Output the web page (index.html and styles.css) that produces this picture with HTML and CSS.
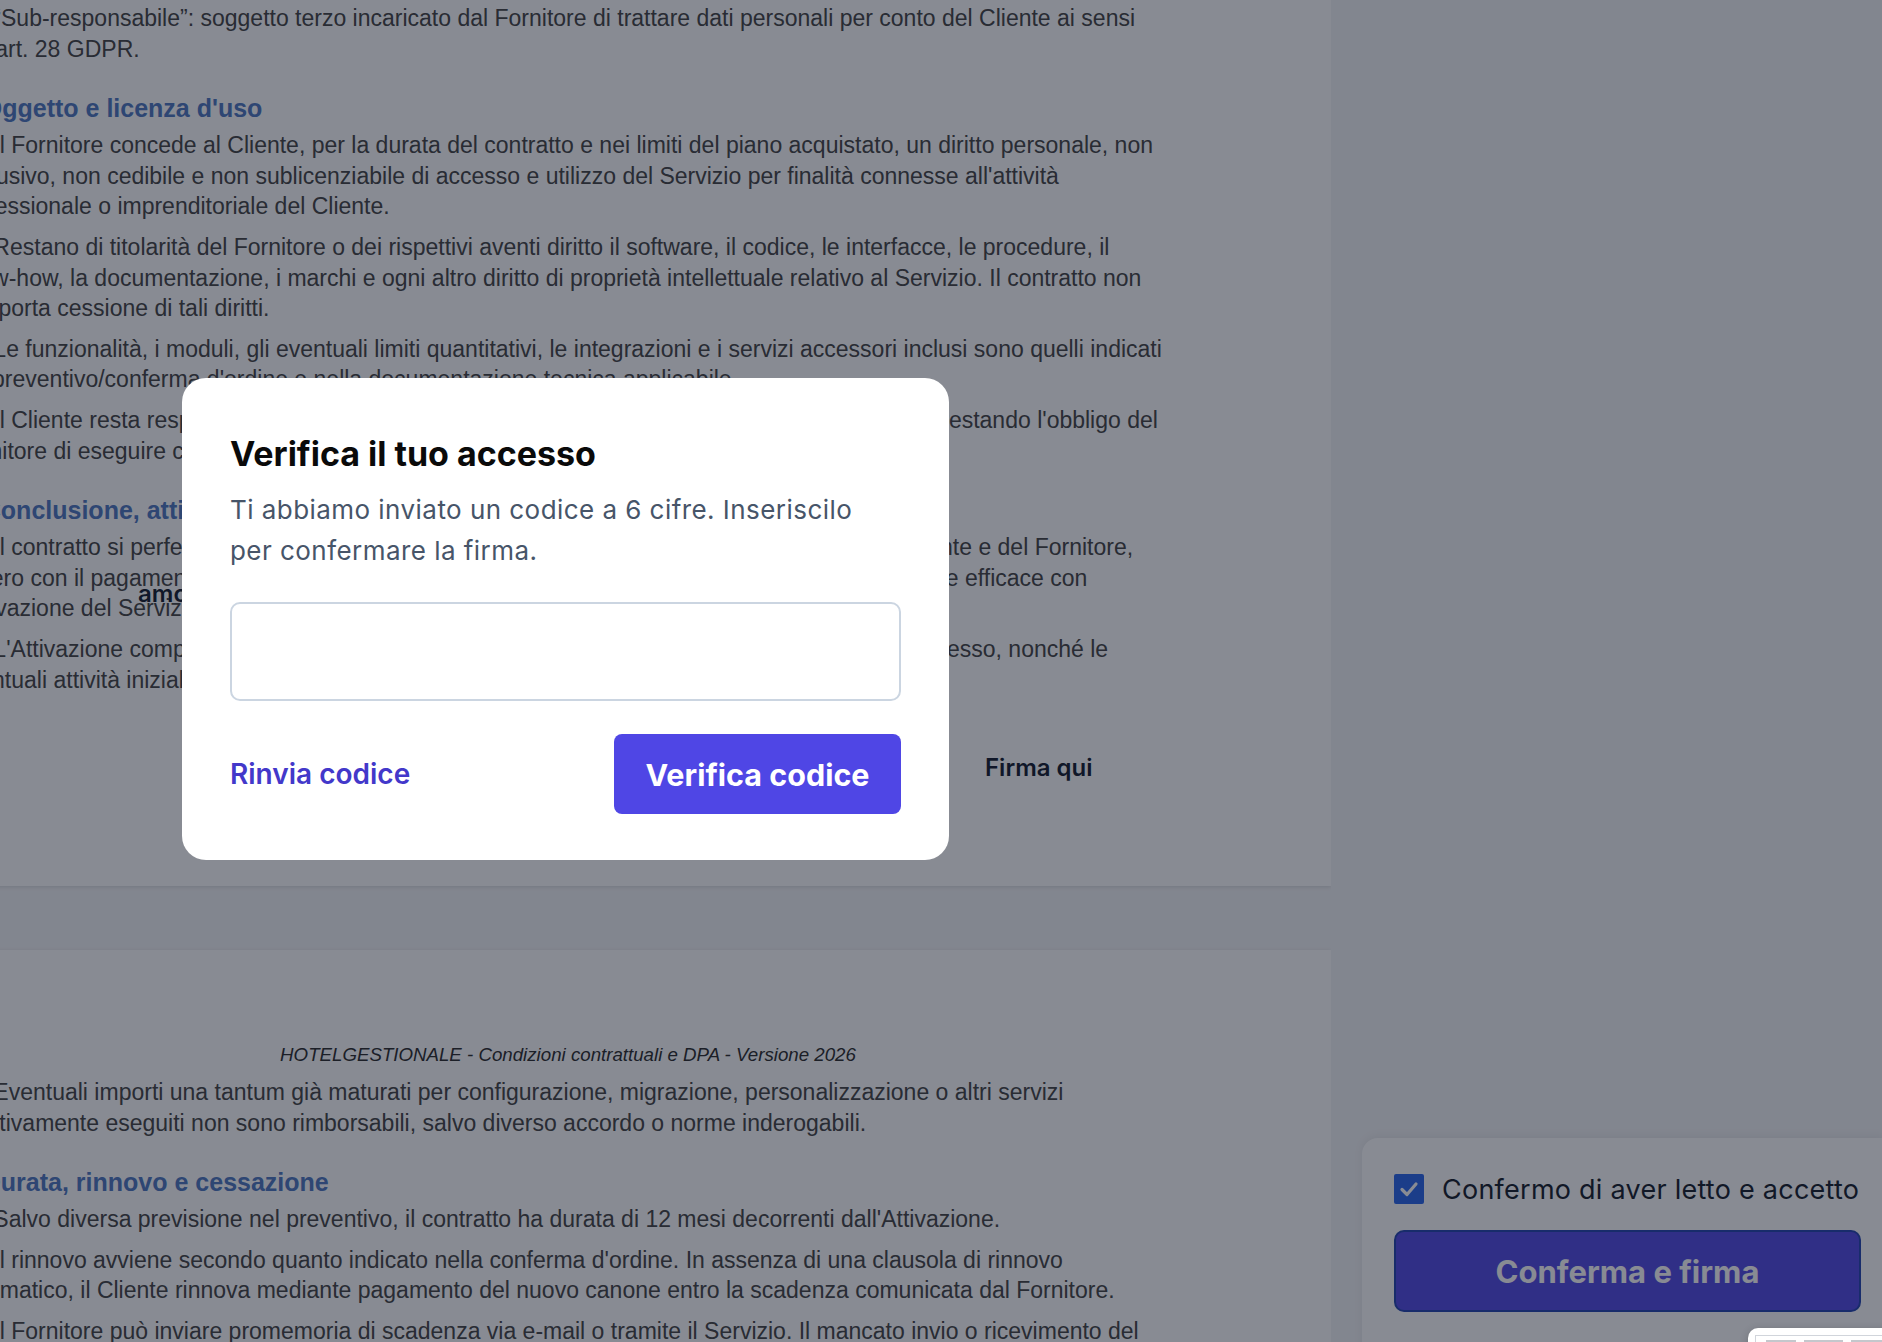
FILE: index.html
```html
<!DOCTYPE html>
<html lang="it">
<head>
<meta charset="utf-8">
<title>Firma contratto - HOTELGESTIONALE</title>
<link rel="stylesheet" href="styles.css">
</head>
<body>
<div class="app">
  <main class="viewer">
    <div class="strip">
      <section class="page page-1">
        <p class="para"><span class="ln">1.8 “Sub-responsabile”: soggetto terzo incaricato dal Fornitore di trattare dati personali per conto del Cliente ai sensi</span><span class="ln">dell'art. 28 GDPR.</span></p>
        <h2 class="sec">2. Oggetto e licenza d'uso</h2>
        <p class="para"><span class="ln">2.1 Il Fornitore concede al Cliente, per la durata del contratto e nei limiti del piano acquistato, un diritto personale, non</span><span class="ln">esclusivo, non cedibile e non sublicenziabile di accesso e utilizzo del Servizio per finalità connesse all'attività</span><span class="ln">professionale o imprenditoriale del Cliente.</span></p>
        <p class="para"><span class="ln">2.2 Restano di titolarità del Fornitore o dei rispettivi aventi diritto il software, il codice, le interfacce, le procedure, il</span><span class="ln">know-how, la documentazione, i marchi e ogni altro diritto di proprietà intellettuale relativo al Servizio. Il contratto non</span><span class="ln">comporta cessione di tali diritti.</span></p>
        <p class="para"><span class="ln">2.3 Le funzionalità, i moduli, gli eventuali limiti quantitativi, le integrazioni e i servizi accessori inclusi sono quelli indicati</span><span class="ln">nel preventivo/conferma d'ordine e nella documentazione tecnica applicabile.</span></p>
        <p class="para"><span class="ln">2.4 Il Cliente resta responsabile dell'utilizzo del Servizio da parte dei suoi utenti autorizzati fermo restando l'obbligo del</span><span class="ln">Fornitore di eseguire correttamente le prestazioni contrattuali.</span></p>
        <h2 class="sec">3. Conclusione, attivazione e accesso</h2>
        <p class="para"><span class="ln">3.1 Il contratto si perfeziona con l'accettazione delle presenti condizioni generali da parte del Cliente e del Fornitore,</span><span class="ln">ovvero con il pagamento della prima fattura inviata dal Fornitore e diviene pienamente vincolante e efficace con</span><span class="ln">l'attivazione del Servizio.</span></p>
        <p class="para"><span class="ln">3.2 L'Attivazione comprende la creazione dell'account utente, la consegna delle credenziali di accesso, nonché le</span><span class="ln">eventuali attività iniziali di configurazione concordate.</span></p>
        <span class="field-label field-a">amo</span>
        <span class="field-label field-b">Firma qui</span>
      </section>
      <section class="page page-2">
        <p class="running-head">HOTELGESTIONALE - Condizioni contrattuali e DPA - Versione 2026</p>
        <p class="para"><span class="ln">3.4 Eventuali importi una tantum già maturati per configurazione, migrazione, personalizzazione o altri servizi</span><span class="ln">effettivamente eseguiti non sono rimborsabili, salvo diverso accordo o norme inderogabili.</span></p>
        <h2 class="sec">4. Durata, rinnovo e cessazione</h2>
        <p class="para"><span class="ln">4.1 Salvo diversa previsione nel preventivo, il contratto ha durata di 12 mesi decorrenti dall'Attivazione.</span></p>
        <p class="para"><span class="ln">4.2 Il rinnovo avviene secondo quanto indicato nella conferma d'ordine. In assenza di una clausola di rinnovo</span><span class="ln">automatico, il Cliente rinnova mediante pagamento del nuovo canone entro la scadenza comunicata dal Fornitore.</span></p>
        <p class="para"><span class="ln">4.3 Il Fornitore può inviare promemoria di scadenza via e-mail o tramite il Servizio. Il mancato invio o ricevimento del</span></p>
      </section>
    </div>
  </main>
  <aside class="sidebar">
    <div class="confirm-card">
      <label class="agree">
        <span class="check"><svg viewBox="0 0 30 30" width="30" height="30"><polyline points="8,15.5 13,20.5 22,10" fill="none" stroke="#fff" stroke-width="3.2" stroke-linecap="round" stroke-linejoin="round"/></svg></span>
        <span class="agree-text">Confermo di aver letto e accetto</span>
      </label>
      <button class="sign-btn" type="button">Conferma e firma</button>
    </div>
  </aside>
</div>

<div class="overlay">
  <div class="modal" role="dialog" aria-labelledby="otp-title">
    <h2 class="modal-title" id="otp-title">Verifica il tuo accesso</h2>
    <p class="modal-text">Ti abbiamo inviato un codice a 6 cifre. Inseriscilo per confermare la firma.</p>
    <input class="otp-input" type="text" inputmode="numeric" maxlength="6" aria-label="Codice a 6 cifre">
    <div class="modal-actions">
      <button class="link-btn" type="button">Rinvia codice</button>
      <button class="primary-btn" type="button">Verifica codice</button>
    </div>
  </div>
</div>

<div class="mini-preview">
  <div class="mini-sheet">
    <div class="mini-row"><span class="mini-bar w1"></span><span class="mini-bar w2"></span><span class="mini-bar w3"></span></div>
  </div>
</div>
</body>
</html>
```

FILE: styles.css
```css
html, body {
  margin: 0;
  padding: 0;
  height: 100%;
}

body {
  font-family: Inter, "Noto Sans", "Liberation Sans", sans-serif;
  background: #f3f4f6;
  overflow: hidden;
}

.app {
  display: flex;
  height: 100vh;
  overflow: hidden;
  background: #f3f4f6;
}

/* document viewer */
.viewer {
  flex: none;
  width: 1331px;
  overflow: hidden;
}

.strip {
  margin-left: -195px;
  width: 1526px;
  display: flex;
  flex-direction: column;
  gap: 64px;
}

.page {
  position: relative;
  flex: none;
  box-sizing: border-box;
  background: #ffffff;
  box-shadow: 0 1px 4px rgba(0, 0, 0, 0.12);
  padding: 0 120px 0 150px;
  font-family: "Liberation Sans", Arial, sans-serif;
  font-size: 23px;
  line-height: 30.6px;
  color: #404040;
}

.page-1 {
  height: 886px;
  padding-top: 3px;
}

.page-2 {
  height: 480px;
  padding-top: 93px;
}

.para {
  margin: 0 0 10px;
}

.ln {
  display: block;
  white-space: nowrap;
}

.sec {
  margin: 26px 0 4px;
  font-size: 25px;
  line-height: 36px;
  font-weight: 700;
  color: #4a74bf;
  white-space: nowrap;
}

.running-head {
  width: 1226px;
  margin: 0 0 10px;
  font-size: 18.7px;
  line-height: 24px;
  font-style: italic;
  text-align: center;
  color: #262626;
}

.field-label {
  position: absolute;
  font-family: Inter, "Noto Sans", sans-serif;
  font-size: 24px;
  line-height: 30px;
  font-weight: 600;
  color: #0f172a;
  white-space: nowrap;
}

.field-a {
  left: 333px;
  top: 579px;
}

.field-b {
  left: 1180px;
  top: 753px;
}

/* sidebar */
.sidebar {
  flex: 1;
  display: flex;
  flex-direction: column;
  justify-content: flex-end;
  padding-left: 31px;
}

.confirm-card {
  box-sizing: border-box;
  height: 224px;
  margin-bottom: -20px;
  padding: 36px 23px 0 32px;
  background: #ffffff;
  border-radius: 16px 0 0 0;
  box-shadow: 0 -2px 10px rgba(0, 0, 0, 0.06);
}

.agree {
  display: flex;
  align-items: center;
  gap: 18px;
  height: 30px;
  font-size: 27px;
  letter-spacing: 0.25px;
  color: #111827;
  white-space: nowrap;
}

.check {
  flex: none;
  display: block;
  width: 30px;
  height: 30px;
  background: #2563eb;
  border-radius: 2px;
}

.check svg {
  display: block;
}

.sign-btn {
  display: flex;
  align-items: center;
  justify-content: center;
  box-sizing: border-box;
  margin-top: 26px;
  width: 467px;
  height: 82px;
  border: 2px solid #1e40af;
  border-radius: 10px;
  background: #4f46e5;
  color: #ffffff;
  font-family: Inter, "Noto Sans", sans-serif;
  font-size: 31px;
  font-weight: 700;
}

/* modal */
.overlay {
  position: fixed;
  inset: 0;
  z-index: 10;
  box-sizing: border-box;
  padding: 378px 0 0 182px;
  background: rgba(17, 24, 39, 0.5);
  display: flex;
  align-items: flex-start;
}

.modal {
  box-sizing: border-box;
  width: 767px;
  padding: 48px 48px 46px;
  background: #ffffff;
  border-radius: 24px;
}

.modal-title {
  margin: 0;
  font-size: 34px;
  line-height: 56px;
  font-weight: 700;
  color: #0a0a0a;
}

.modal-text {
  margin: 7px 0 0;
  font-size: 26px;
  line-height: 41px;
  letter-spacing: 0.45px;
  color: #475569;
}

.otp-input {
  display: block;
  box-sizing: border-box;
  width: 100%;
  height: 99px;
  margin-top: 31px;
  border: 2px solid #cbd5e1;
  border-radius: 10px;
  background: #ffffff;
  font-size: 28px;
  outline: none;
}

.modal-actions {
  display: flex;
  justify-content: space-between;
  align-items: center;
  margin-top: 33px;
}

.link-btn {
  padding: 0;
  border: 0;
  background: none;
  color: #4338ca;
  font-family: Inter, "Noto Sans", sans-serif;
  font-size: 28px;
  font-weight: 600;
}

.primary-btn {
  width: 287px;
  height: 80px;
  padding: 0;
  border: 0;
  border-radius: 8px;
  background: #4f46e5;
  color: #ffffff;
  font-family: Inter, "Noto Sans", sans-serif;
  font-size: 30.5px;
  font-weight: 700;
}

/* floating page preview */
.mini-preview {
  position: fixed;
  left: 1748px;
  top: 1328px;
  z-index: 20;
  box-sizing: border-box;
  width: 170px;
  height: 90px;
  padding: 7px;
  background: #ffffff;
  border-radius: 10px;
  box-shadow: 0 2px 8px rgba(0, 0, 0, 0.2);
}

.mini-sheet {
  box-sizing: border-box;
  height: 100%;
  border: 1px solid #d1d5db;
  padding: 4px 10px;
}

.mini-row {
  display: flex;
  gap: 8px;
}

.mini-bar {
  display: block;
  height: 2px;
  background: #c4c7cc;
}

.w1 { width: 30px; }
.w2 { width: 40px; }
.w3 { width: 50px; }
```
